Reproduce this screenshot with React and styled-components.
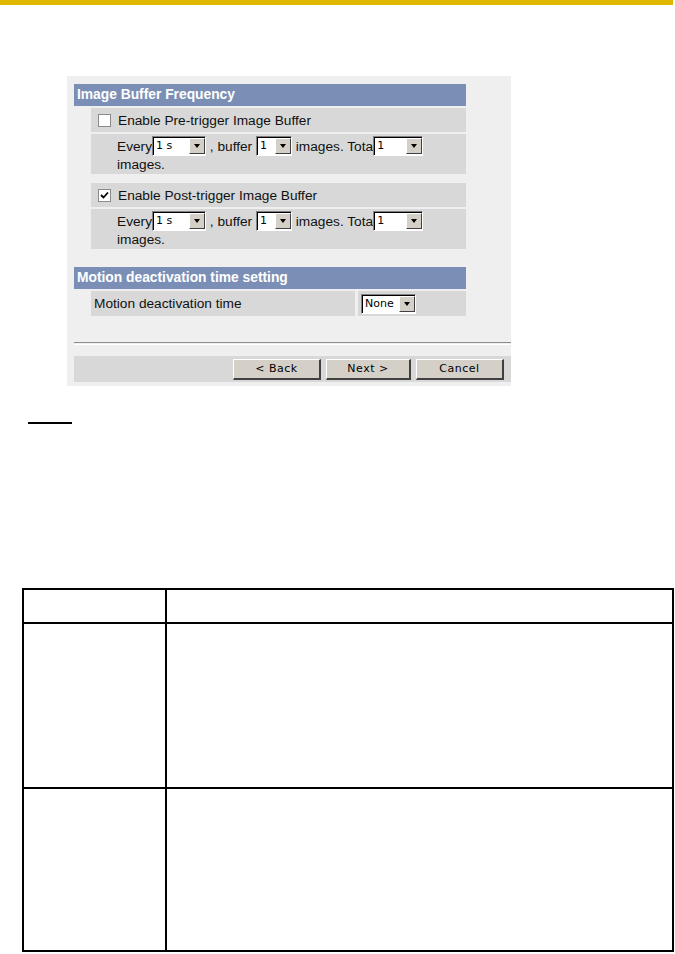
import React from "react";
import styled, { createGlobalStyle } from "styled-components";

const GlobalStyle = createGlobalStyle`
  body {
    margin: 0;
    background: #fff;
    font-family: "Liberation Sans", Arial, sans-serif;
  }
`;

const Page = styled.div`
  width: 675px;
  height: 954px;
  overflow: hidden;
  background: #fff;
`;

const TopBar = styled.div`
  width: 673px;
  height: 5px;
  background: #dfb800;
`;

const Shot = styled.div`
  margin: 71px 0 0 67px;
  width: 444px;
  height: 310px;
  background: #efefef;
  padding: 8px 0 0 7px;
  box-sizing: border-box;
  display: flex;
  flex-direction: column;
`;

const SectionHead = styled.div`
  flex: none;
  width: 392px;
  height: 22px;
  background: #7b8fb6;
  color: #fff;
  font-weight: bold;
  font-size: 13.8px;
  line-height: 22px;
  padding-left: 3px;
  box-sizing: border-box;
  margin-top: ${(p) => p.$top || 0}px;
`;

const Row = styled.div`
  flex: none;
  width: 375px;
  height: ${(p) => p.$h}px;
  background: #d8d8d8;
  font-size: 13.7px;
  color: #111;
  box-sizing: border-box;
  padding: ${(p) => p.$pad};
  margin: ${(p) => p.$top || 2}px 0 0 17px;
`;

const CheckLine = styled.div`
  display: flex;
  align-items: center;
  gap: 7px;
  height: 24px;
`;

const InlineLine = styled.div`
  display: flex;
  align-items: center;
  height: 20px;
  white-space: pre;
`;

const WrapLine = styled.div`
  height: 17px;
  line-height: 17px;
`;

const Box = styled.span`
  width: 11px;
  height: 11px;
  background: #fff;
  border: 1px solid #8a8a8a;
  display: inline-flex;
  align-items: center;
  justify-content: center;
`;

const SelectBox = styled.span`
  display: inline-flex;
  flex: none;
  width: ${(p) => p.$w}px;
  height: 20px;
  box-sizing: border-box;
  background: #fff;
  border-top: 1px solid #808080;
  border-left: 1px solid #808080;
  border-right: 1px solid #fff;
  border-bottom: 1px solid #fff;
`;

const SelectInner = styled.span`
  flex: 1;
  display: flex;
  border-top: 1px solid #000;
  border-left: 1px solid #000;
  font-family: "DejaVu Sans", sans-serif;
  font-size: 11px;
  line-height: 16px;
  padding-left: 2px;
  color: #000;
  overflow: hidden;
`;

const SelectText = styled.span`
  flex: 1;
`;

const Arrow = styled.span`
  width: 16px;
  height: 16px;
  box-sizing: border-box;
  background: #d4d0c8;
  border-top: 1px solid #fff;
  border-left: 1px solid #fff;
  border-right: 1px solid #404040;
  border-bottom: 1px solid #404040;
  display: flex;
  align-items: center;
  justify-content: center;
  &::after {
    content: "";
    border-left: 3.5px solid transparent;
    border-right: 3.5px solid transparent;
    border-top: 4px solid #000;
  }
`;

const Select = ({ w, value }) => (
  <SelectBox $w={w}>
    <SelectInner>
      <SelectText>{value}</SelectText>
      <Arrow />
    </SelectInner>
  </SelectBox>
);

const MotionRow = styled.div`
  flex: none;
  margin: 2px 0 0 17px;
  width: 375px;
  height: 25px;
  display: grid;
  grid-template-columns: 264px 108px;
  gap: 3px;
`;

const Cell = styled.div`
  background: #d8d8d8;
  font-size: 13.7px;
  color: #111;
  display: flex;
  align-items: center;
  padding-left: ${(p) => p.$pl}px;
`;

const Rule = styled.div`
  flex: none;
  margin-top: 26px;
  height: 1px;
  border-top: 1px solid #8c8c8c;
  border-bottom: 1px solid #fff;
`;

const ButtonBar = styled.div`
  flex: none;
  margin-top: 11px;
  height: 26px;
  background: #d8d8d8;
  display: flex;
  align-items: center;
  padding-left: 159px;
  gap: 5px;
`;

const Btn = styled.div`
  width: ${(p) => p.$w}px;
  height: 21px;
  box-sizing: border-box;
  background: #d4d0c8;
  border-top: 1px solid #fff;
  border-left: 1px solid #fff;
  border-right: 2px solid #404040;
  border-bottom: 2px solid #404040;
  font-family: "DejaVu Sans", sans-serif;
  font-size: 11px;
  letter-spacing: 0.5px;
  color: #000;
  display: flex;
  align-items: center;
  justify-content: center;
`;

const NoteLine = styled.div`
  margin: 36px 0 0 28px;
  width: 44px;
  height: 2px;
  background: #000;
`;

const Table = styled.div`
  margin: 164px 0 0 22px;
  width: 652px;
  display: grid;
  grid-template-columns: 143px 1fr;
  grid-template-rows: 34px 165px 163px;
  border-top: 2px solid #000;
  border-left: 2px solid #000;
  box-sizing: border-box;
`;

const TCell = styled.div`
  border-right: 2px solid #000;
  border-bottom: 2px solid #000;
`;

const BufferRow = () => (
  <Row $h={40} $pad="2px 0 0 26px">
    <InlineLine>
      Every<Select w={54} value="1 s" />{" , buffer "}
      <Select w={36} value="1" />{" images. Tota"}
      <Select w={50} value="1" />
    </InlineLine>
    <WrapLine>images.</WrapLine>
  </Row>
);

export default function App() {
  return (
    <Page>
      <GlobalStyle />
      <TopBar />
      <Shot>
        <SectionHead>Image Buffer Frequency</SectionHead>
        <Row $h={24} $pad="0 0 0 7px">
          <CheckLine>
            <Box />
            Enable Pre-trigger Image Buffer
          </CheckLine>
        </Row>
        <BufferRow />
        <Row $h={24} $pad="0 0 0 7px" $top={9}>
          <CheckLine>
            <Box>
              <svg width="9" height="9" viewBox="0 0 9 9">
                <path d="M1 4 L3.5 6.5 L8 1.5" stroke="#000" strokeWidth="1.8" fill="none" />
              </svg>
            </Box>
            Enable Post-trigger Image Buffer
          </CheckLine>
        </Row>
        <BufferRow />
        <SectionHead $top={18}>Motion deactivation time setting</SectionHead>
        <MotionRow>
          <Cell $pl={3}>Motion deactivation time</Cell>
          <Cell $pl={3}>
            <Select w={55} value="None" />
          </Cell>
        </MotionRow>
        <Rule />
        <ButtonBar>
          <Btn $w={88}>&lt; Back</Btn>
          <Btn $w={85}>Next &gt;</Btn>
          <Btn $w={88}>Cancel</Btn>
        </ButtonBar>
      </Shot>
      <NoteLine />
      <Table>
        <TCell />
        <TCell />
        <TCell />
        <TCell />
        <TCell />
        <TCell />
      </Table>
    </Page>
  );
}
